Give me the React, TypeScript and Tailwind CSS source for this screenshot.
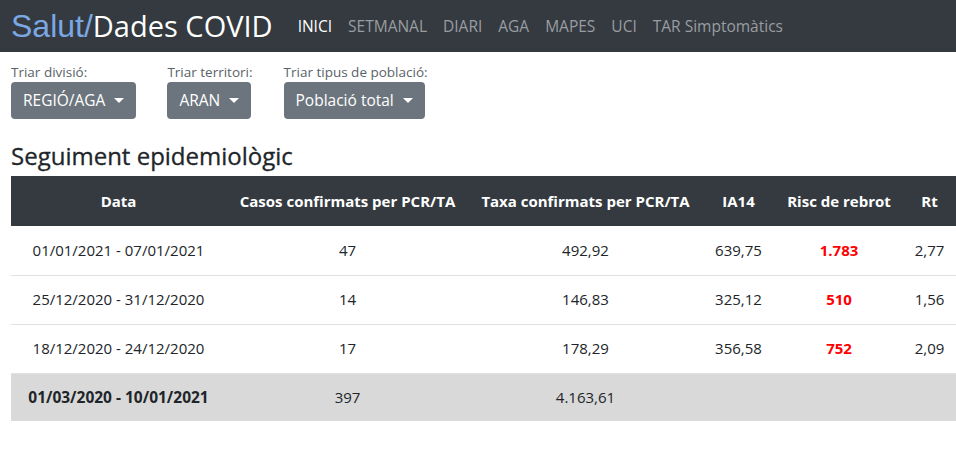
import React from 'react';

const font = { fontFamily: '"Open Sans", "Noto Sans", sans-serif' };

const navLinks = ['INICI', 'SETMANAL', 'DIARI', 'AGA', 'MAPES', 'UCI', 'TAR Simptomàtics'];

const pickers = [
  { label: 'Triar divisió:', value: 'REGIÓ/AGA' },
  { label: 'Triar territori:', value: 'ARAN' },
  { label: 'Triar tipus de població:', value: 'Població total' },
];

type Row = { data: string; casos: string; taxa: string; ia14: string; risc: string; rt: string };

const rows: Row[] = [
  { data: '01/01/2021 - 07/01/2021', casos: '47', taxa: '492,92', ia14: '639,75', risc: '1.783', rt: '2,77' },
  { data: '25/12/2020 - 31/12/2020', casos: '14', taxa: '146,83', ia14: '325,12', risc: '510', rt: '1,56' },
  { data: '18/12/2020 - 24/12/2020', casos: '17', taxa: '178,29', ia14: '356,58', risc: '752', rt: '2,09' },
];

function Caret() {
  return <span className="ml-[9px] inline-block h-0 w-0 border-x-[5px] border-t-[5px] border-x-transparent border-t-white align-middle" />;
}

export default function App() {
  return (
    <div className="min-h-screen w-[956px] overflow-hidden bg-white text-[#212529]" style={font}>
      <nav className="flex h-[52px] items-center bg-[#343a40] pl-[11px]">
        <div className="flex items-baseline whitespace-nowrap leading-none">
          <span className="text-[32px] text-[#7ba8e4]" style={{ fontFamily: '"Liberation Sans", Arial, sans-serif' }}>
            Salut/
          </span>
          <span className="text-[29px] text-white">Dades COVID</span>
        </div>
        <ul className="ml-[17px] flex items-center pt-[2px] text-[15.5px]">
          {navLinks.map((l, i) => (
            <li key={l} className={i === 0 ? 'px-2 text-white' : 'px-2 text-[#9a9da0]'}>
              {l}
            </li>
          ))}
        </ul>
      </nav>

      <div className="px-[11px]">
        <div className="mt-[11px] flex gap-[31px]">
          {pickers.map((p) => (
            <div key={p.label} className="flex flex-col items-start">
              <span className="text-[13.5px] leading-[19px] text-[#5a6268]">{p.label}</span>
              <button className="flex h-[37px] items-center rounded-[4px] bg-[#6c757d] px-[12px] text-[15.5px] text-white">
                {p.value}
                <Caret />
              </button>
            </div>
          ))}
        </div>

        <h2 className="mt-[20px] text-[24px] font-medium leading-[34px] text-[#212529]" style={{ WebkitTextStroke: '0.3px #212529' }}>
          Seguiment epidemiològic
        </h2>
      </div>

      <table className="ml-[11px] mt-[3px] w-[945px] table-fixed border-collapse text-[15px]">
        <colgroup>
          <col className="w-[215px]" />
          <col className="w-[243px]" />
          <col className="w-[233px]" />
          <col className="w-[73px]" />
          <col className="w-[128px]" />
          <col className="w-[53px]" />
        </colgroup>
        <thead>
          <tr className="h-[50px] bg-[#343a40] text-white">
            {['Data', 'Casos confirmats per PCR/TA', 'Taxa confirmats per PCR/TA', 'IA14', 'Risc de rebrot', 'Rt'].map((h) => (
              <th key={h} className="whitespace-nowrap px-[8px] text-center font-bold">
                {h}
              </th>
            ))}
          </tr>
        </thead>
        <tbody>
          {rows.map((r) => (
            <tr key={r.data} className="h-[49px] border-b border-[#dee2e6]">
              <td className="text-center">{r.data}</td>
              <td className="text-center">{r.casos}</td>
              <td className="text-center">{r.taxa}</td>
              <td className="text-center">{r.ia14}</td>
              <td className="text-center font-bold text-[#ff0000]">{r.risc}</td>
              <td className="text-center">{r.rt}</td>
            </tr>
          ))}
          <tr className="h-[48px] bg-[#d9d9d9]">
            <td className="text-center text-[15.5px] font-bold">01/03/2020 - 10/01/2021</td>
            <td className="text-center">397</td>
            <td className="text-center">4.163,61</td>
            <td />
            <td />
            <td />
          </tr>
        </tbody>
      </table>
    </div>
  );
}
